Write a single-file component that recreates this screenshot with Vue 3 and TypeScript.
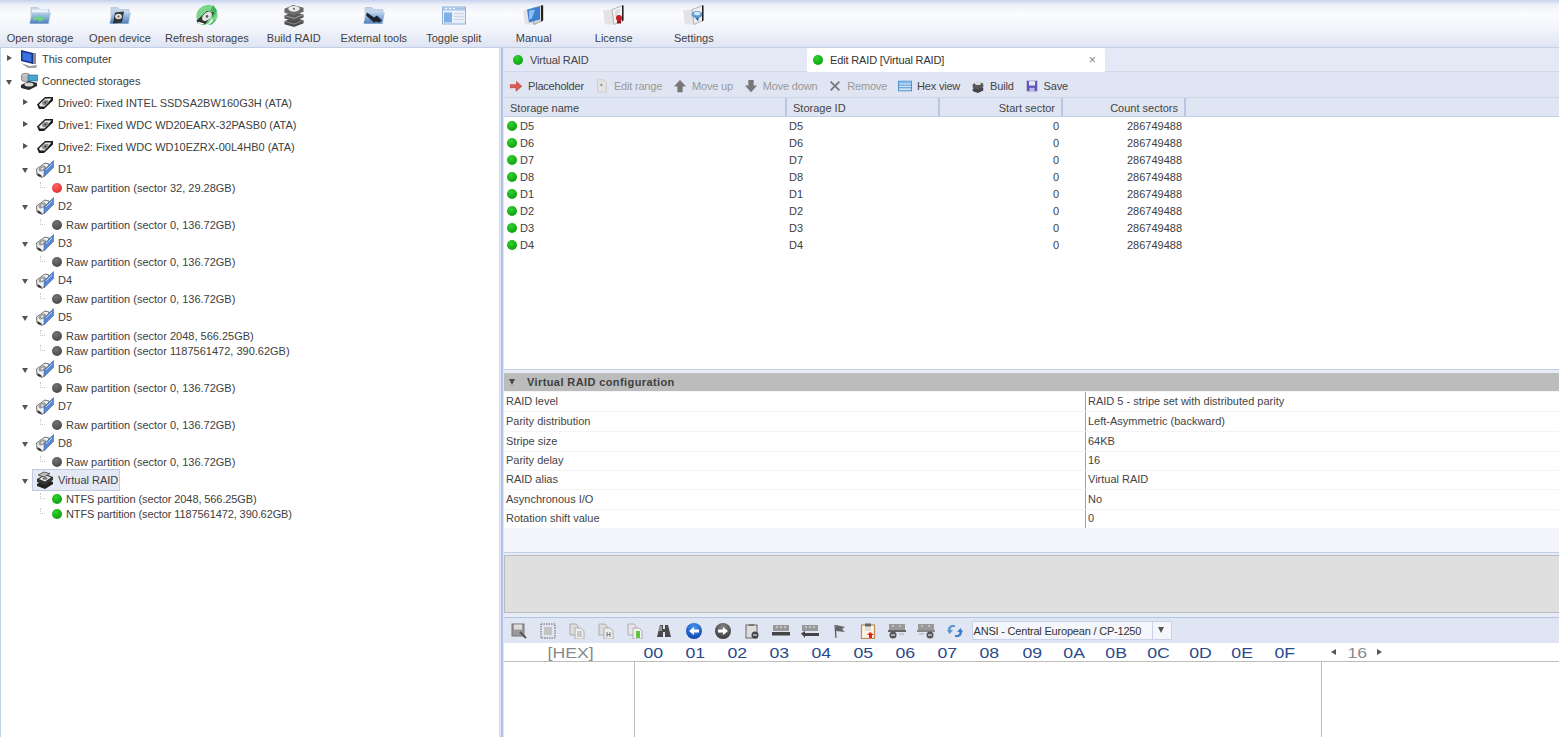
<script setup lang="ts">
type TreeRow = { label: string; indent: number; kind: string; icon?: string; open?: boolean; dot?: string; selected?: boolean };

const mainTools = [
  { label: "Open storage", icon: "i-folder-arrow" },
  { label: "Open device", icon: "i-folder-disk" },
  { label: "Refresh storages", icon: "i-refresh" },
  { label: "Build RAID", icon: "i-stack" },
  { label: "External tools", icon: "i-folder-plug" },
  { label: "Toggle split", icon: "i-split" },
  { label: "Manual", icon: "i-manual" },
  { label: "License", icon: "i-license" },
  { label: "Settings", icon: "i-settings" },
];

const tree: TreeRow[] = [
  { label: "This computer", indent: 0, kind: "node", icon: "i-computer" },
  { label: "Connected storages", indent: 0, kind: "node", icon: "i-storages", open: true },
  { label: "Drive0: Fixed INTEL SSDSA2BW160G3H (ATA)", indent: 1, kind: "node", icon: "i-disk" },
  { label: "Drive1: Fixed WDC WD20EARX-32PASB0 (ATA)", indent: 1, kind: "node", icon: "i-disk" },
  { label: "Drive2: Fixed WDC WD10EZRX-00L4HB0 (ATA)", indent: 1, kind: "node", icon: "i-disk" },
];
const addDrive = (name: string, parts: string[], dot: string) => {
  tree.push({ label: name, indent: 1, kind: "node", icon: "i-disk-blue", open: true });
  parts.forEach((p) => tree.push({ label: p, indent: 1, kind: "leaf", dot }));
};
addDrive("D1", ["Raw partition (sector 32, 29.28GB)"], "red");
addDrive("D2", ["Raw partition (sector 0, 136.72GB)"], "gray");
addDrive("D3", ["Raw partition (sector 0, 136.72GB)"], "gray");
addDrive("D4", ["Raw partition (sector 0, 136.72GB)"], "gray");
addDrive("D5", ["Raw partition (sector 2048, 566.25GB)", "Raw partition (sector 1187561472, 390.62GB)"], "gray");
addDrive("D6", ["Raw partition (sector 0, 136.72GB)"], "gray");
addDrive("D7", ["Raw partition (sector 0, 136.72GB)"], "gray");
addDrive("D8", ["Raw partition (sector 0, 136.72GB)"], "gray");
tree.push({ label: "Virtual RAID", indent: 1, kind: "node", icon: "i-raid", open: true, selected: true });
tree.push({ label: "NTFS partition (sector 2048, 566.25GB)", indent: 1, kind: "leaf", dot: "green" });
tree.push({ label: "NTFS partition (sector 1187561472, 390.62GB)", indent: 1, kind: "leaf", dot: "green" });

const editTools = [
  { label: "Placeholder", icon: "i-arrow-red", off: false },
  { label: "Edit range", icon: "i-range", off: true },
  { label: "Move up", icon: "i-up", off: true },
  { label: "Move down", icon: "i-down", off: true },
  { label: "Remove", icon: "i-x", off: true },
  { label: "Hex view", icon: "i-hex", off: false },
  { label: "Build", icon: "i-build", off: false },
  { label: "Save", icon: "i-save", off: false },
];

const storages = ["D5", "D6", "D7", "D8", "D1", "D2", "D3", "D4"];

const config = [
  { key: "RAID level", value: "RAID 5 - stripe set with distributed parity", h: 20 },
  { key: "Parity distribution", value: "Left-Asymmetric (backward)", h: 20 },
  { key: "Stripe size", value: "64KB", h: 20 },
  { key: "Parity delay", value: "16", h: 19 },
  { key: "RAID alias", value: "Virtual RAID", h: 19 },
  { key: "Asynchronous I/O", value: "No", h: 20 },
  { key: "Rotation shift value", value: "0", h: 19 },
];

const hexIcons = [
  "h-find", "h-select", "h-copy", "h-copy-h", "h-copy-g", "h-binoc", "h-back", "h-fwd", "h-clip-go",
  "h-bar-l", "h-bar-r", "h-flag", "h-clip-red", "h-bar-go", "h-bar-go2", "h-sync",
];
const hexCols = ["00", "01", "02", "03", "04", "05", "06", "07", "08", "09", "0A", "0B", "0C", "0D", "0E", "0F"];
</script>

<template>
  <div class="app">
    <svg class="defs" width="0" height="0" aria-hidden="true">
      <defs>
        <linearGradient id="gFolder" x1="0" y1="0" x2="0" y2="1"><stop offset="0" stop-color="#b9d2f0" /><stop offset="1" stop-color="#4f7fb8" /></linearGradient>
        <radialGradient id="gBlue" cx=".5" cy=".3" r=".8"><stop offset="0" stop-color="#4a9cf0" /><stop offset="1" stop-color="#0535a8" /></radialGradient>
        <radialGradient id="gDark" cx=".5" cy=".3" r=".8"><stop offset="0" stop-color="#8a8a8a" /><stop offset="1" stop-color="#2c2c2c" /></radialGradient>
      </defs>

      <symbol id="i-folder-arrow" viewBox="0 0 24 22">
        <path d="M3 3h7l2 2h9v14H3z" fill="#c4d4e8" stroke="#a9bdd6" stroke-width=".6" />
        <path d="M4 5h16v3H4z" fill="#eef3fa" />
        <path d="M4.500 8H23l-3 11H1.500z" fill="url(#gFolder)" />
        <path d="M5 12.500h6V10l6 4-6 4v-2.500H5z" fill="#6fd08a" />
      </symbol>
      <symbol id="i-folder-disk" viewBox="0 0 24 22">
        <path d="M3 3h7l2 2h9v14H3z" fill="#c4d4e8" stroke="#a9bdd6" stroke-width=".6" />
        <path d="M4.500 8H23l-3 11H1.500z" fill="url(#gFolder)" />
        <path d="M7 8l9-1-2 11-9 1z" fill="#333" />
        <ellipse cx="10.500" cy="12" rx="3.400" ry="2.800" fill="#dcdcdc" />
        <circle cx="10.500" cy="12" r="1" fill="#555" />
      </symbol>
      <symbol id="i-refresh" viewBox="0 0 26 26">
        <path d="M13 1c7-1 12 4 12 11 0 3-1 6-3 8l-4-3-3 5-6 2c-5-1-8-5-8-10C1 7 6 2 13 1z" fill="#79d68a" />
        <path d="M20 1l4 6-3 8-3-1 1-6-3 1z" fill="#3fb35c" />
        <path d="M1 19l12-11 8 2-10 13-8-1z" fill="#333" />
        <ellipse cx="13" cy="14" rx="6.500" ry="4" transform="rotate(-40 13 14)" fill="#e4e4e4" />
        <circle cx="13" cy="14" r="1.500" fill="#555" />
        <path d="M3 20l7 2-2 1-5-1z" fill="#fff" />
        <path d="M14 24l5-1 4-5-2 0-4 4z" fill="#3fb35c" />
      </symbol>
      <symbol id="i-stack" viewBox="0 0 22 24">
        <path d="M1 18l9-4 11 3v3l-10 4-10-3z" fill="#4c4c4c" />
        <path d="M1 18l10 3 10-4" fill="none" stroke="#a0a0a0" stroke-width=".8" />
        <path d="M1 12l9-4 11 3v3l-10 4-10-3z" fill="#5a5a5a" />
        <path d="M1 12l10 3 10-4" fill="none" stroke="#b0b0b0" stroke-width=".8" />
        <path d="M1 5l9-4 11 3v4l-10 4-10-3z" fill="#6a6a6a" />
        <ellipse cx="11" cy="5" rx="6" ry="3" fill="#ececec" />
        <circle cx="11" cy="5" r="1.200" fill="#777" />
      </symbol>
      <symbol id="i-folder-plug" viewBox="0 0 24 22">
        <path d="M3 3h7l2 2h9v14H3z" fill="#c4d4e8" stroke="#a9bdd6" stroke-width=".6" />
        <path d="M4.500 8H23l-3 11H1.500z" fill="url(#gFolder)" />
        <path d="M5 8l7 5 3-2 5 5-3 2-3-1-2 1-8-7z" fill="#1b2430" />
      </symbol>
      <symbol id="i-split" viewBox="0 0 24 18">
        <rect x=".5" y=".5" width="23" height="17" fill="#e9f0fa" stroke="#8db0da" />
        <rect x="1" y="1" width="22" height="3" fill="#a9c6ea" />
        <path d="M3 2h2M7 2h2M11 2h2" stroke="#fff" />
        <rect x="2" y="6" width="8" height="10" fill="#7fb0e6" />
        <path d="M12 7h10M12 10h10M12 13h10" stroke="#c7d4e6" />
        <path d="M16 6v10M19 6v10" stroke="#dbe3ee" />
      </symbol>
      <symbol id="i-manual" viewBox="0 0 24 22">
        <path d="M1 6l9-1 2 15H3z" fill="#e3e3e3" />
        <path d="M10 4l11-3v15l-9 4z" fill="#d8d8d8" stroke="#555" stroke-width=".5" />
        <path d="M5 5l13-3v13L7 18z" fill="#3c7fd0" />
        <path d="M7 6l6-1-3 9-3 1z" fill="#a8ccf2" opacity=".8" />
        <path d="M19 1l2 0v15l-2 1z" fill="#222" />
      </symbol>
      <symbol id="i-license" viewBox="0 0 24 22">
        <path d="M1 6l9-1 2 15H3z" fill="#e3e3e3" />
        <path d="M10 5l11-4v15l-9 4z" fill="#f3f3f3" stroke="#777" stroke-width=".5" />
        <path d="M13 7l5-2M13 9l5-2M13 11l3-1" stroke="#bbb" stroke-width=".8" />
        <circle cx="17" cy="13.500" r="3" fill="#cc1c1c" />
        <path d="M15 16h4v3h-4z" fill="#a01010" />
        <path d="M20 1h1.500v15l-1.500 1z" fill="#222" />
      </symbol>
      <symbol id="i-settings" viewBox="0 0 24 22">
        <path d="M1 6l9-1 2 15H3z" fill="#e3e3e3" />
        <path d="M10 5l11-4v15l-9 4z" fill="#eee" stroke="#777" stroke-width=".5" />
        <ellipse cx="15" cy="10" rx="5.500" ry="3.500" fill="#5b9bd8" />
        <ellipse cx="15" cy="9" rx="3.200" ry="1.800" fill="#d6e9fa" />
        <path d="M13 13l3 4 1-4z" fill="#3d6f9f" />
        <path d="M20 1h1.500v15l-1.500 1z" fill="#222" />
      </symbol>

      <symbol id="i-computer" viewBox="0 0 18 18">
        <path d="M1 0l12 3v11L1 11z" fill="#16308c" />
        <path d="M2.500 2l9 2.200v7.800l-9-2.300z" fill="#3d73e0" />
        <path d="M13 3l3 0v11l-3 0z" fill="#8c8c8c" />
        <path d="M1 13l9 3 7-1-1 3H8z" fill="#a0a0a0" />
      </symbol>
      <symbol id="i-storages" viewBox="0 0 18 18">
        <ellipse cx="5.500" cy="3.500" rx="4" ry="2.200" fill="#c9c9c9" stroke="#555" stroke-width=".6" />
        <path d="M1.500 4v4c1 2 7 2 8 0V4" fill="#bdbdbd" stroke="#555" stroke-width=".6" />
        <rect x="8" y="3" width="9.500" height="6" fill="#45a6cf" stroke="#27627e" stroke-width=".6" />
        <path d="M1 13l8-4 8 2v3l-8 4-8-2z" fill="#2b2b2b" />
        <ellipse cx="9" cy="12.500" rx="4.500" ry="2" fill="#d8d8d8" />
      </symbol>
      <symbol id="i-disk" viewBox="0 0 18 18">
        <path d="M1 10.500L9 3h8v3.500L8 15H3z" fill="#1c1c1c" />
        <path d="M3 10.500L9.500 4.500h6L8.500 12.500H4z" fill="#ececec" />
        <ellipse cx="9.300" cy="8.500" rx="3.600" ry="2.200" transform="rotate(-30 9.300 8.500)" fill="#8f8f8f" />
        <circle cx="9.300" cy="8.500" r="1" fill="#333" />
      </symbol>
      <symbol id="i-disk-blue" viewBox="0 0 18 18">
        <path d="M.5 9L9 3l4 1v7l-7 6.500L1 15z" fill="#f0f0f0" stroke="#333" stroke-width=".7" />
        <ellipse cx="6.300" cy="8.500" rx="4" ry="2.400" transform="rotate(-30 6.300 8.500)" fill="#9a9a9a" />
        <ellipse cx="6.300" cy="8.500" rx="1.500" ry="1" transform="rotate(-30 6.300 8.500)" fill="#e8e8e8" />
        <path d="M8 10l9.500-9.500v7L8 17z" fill="#5a87d2" stroke="#2f5aa0" stroke-width=".5" />
        <path d="M10 10l6-6" stroke="#b5cff2" />
        <path d="M1.500 13l4 2.500v1.500L2 16z" fill="#333" />
      </symbol>
      <symbol id="i-raid" viewBox="0 0 18 18">
        <path d="M1 13l8-5 8 3v2l-8 5-8-3z" fill="#222" />
        <path d="M1 8l8-5 8 3v3l-8 5-8-3z" fill="#333" />
        <path d="M3 8l6-4 6 2.400L9 10.600z" fill="#e4e4e4" />
        <path d="M2 4l6-3 6 1.600-6 3.400z" fill="#bdbdbd" stroke="#222" stroke-width=".6" />
        <ellipse cx="9" cy="7.400" rx="2.400" ry="1.400" fill="#777" />
      </symbol>

      <symbol id="i-arrow-red" viewBox="0 0 16 16">
        <path d="M1 6h7V2l7 6-7 6v-4H1z" fill="#d65a55" />
        <path d="M1 10h7v4l7-6" fill="none" stroke="#8a2e2a" stroke-width=".5" />
      </symbol>
      <symbol id="i-range" viewBox="0 0 16 16">
        <path d="M3 1h7l3 3v11H3z" fill="#e4e4e4" stroke="#c9c9c9" />
        <path d="M6 7h3M7 5v3" stroke="#888" />
      </symbol>
      <symbol id="i-up" viewBox="0 0 16 16"><path d="M8 1l7 7.500h-4V15H5V8.500H1z" fill="#777" /></symbol>
      <symbol id="i-down" viewBox="0 0 16 16"><path d="M8 15L1 7.500h4V1h6v6.500h4z" fill="#777" /></symbol>
      <symbol id="i-x" viewBox="0 0 16 16"><path d="M3 3l10 10M13 3L3 13" stroke="#777" stroke-width="2" /></symbol>
      <symbol id="i-hex" viewBox="0 0 16 16">
        <rect x=".5" y="2.500" width="15" height="11" fill="#cfe4f8" stroke="#3f86c9" />
        <rect x="1" y="3" width="14" height="2" fill="#7db8ea" />
        <path d="M1 7h14M1 10h14" stroke="#3f86c9" />
      </symbol>
      <symbol id="i-build" viewBox="0 0 16 16">
        <path d="M2 11l6-3 6 2v3l-6 3-6-2z" fill="#444" />
        <path d="M2 6l6-3 6 2v4l-6 3-6-2z" fill="#5a5a5a" />
        <ellipse cx="8" cy="5" rx="3.500" ry="1.800" fill="#ddd" />
      </symbol>
      <symbol id="i-save" viewBox="0 0 16 16">
        <rect x="2" y="2" width="12" height="12" fill="#5b56b8" />
        <rect x="4.500" y="2.500" width="7" height="5" fill="#e9e9f5" />
        <rect x="5" y="10" width="6" height="4" fill="#b9b7dc" />
      </symbol>

      <symbol id="h-find" viewBox="0 0 16 16"><rect x="1" y="1" width="12" height="12" fill="#9a9a9a" stroke="#777" /><rect x="3" y="1.500" width="8" height="5" fill="#ddd" /><path d="M9 9l6 6" stroke="#555" stroke-width="2" /></symbol>
      <symbol id="h-select" viewBox="0 0 16 16"><rect x="1" y="1" width="14" height="14" fill="none" stroke="#666" stroke-dasharray="1.500 1" /><rect x="4" y="4" width="8" height="8" fill="#c4c4c4" /></symbol>
      <symbol id="h-copy" viewBox="0 0 16 16"><path d="M1 1h6l2 2v9H1z" fill="#ddd" stroke="#999" stroke-width=".7" /><path d="M6 5h6l3 3v8H6z" fill="#eee" stroke="#999" stroke-width=".7" /><path d="M8 9h5M8 11h5M8 13h5" stroke="#888" stroke-width=".7" /></symbol>
      <symbol id="h-copy-h" viewBox="0 0 16 16"><path d="M1 1h6l2 2v9H1z" fill="#ddd" stroke="#999" stroke-width=".7" /><path d="M6 5h6l3 3v8H6z" fill="#eee" stroke="#999" stroke-width=".7" /><path d="M9 9v5M12 9v5M9 11.500h3" stroke="#777" /></symbol>
      <symbol id="h-copy-g" viewBox="0 0 16 16"><path d="M1 1h6l2 2v9H1z" fill="#e6e6e6" stroke="#999" stroke-width=".7" /><path d="M6 5h6l3 3v8H6z" fill="#f2f2f2" stroke="#999" stroke-width=".7" /><rect x="9" y="8" width="4" height="7" fill="#65c33d" /></symbol>
      <symbol id="h-binoc" viewBox="0 0 16 16"><path d="M4 2h3v4h2V2h3l3 12H9V9H7v5H1z" fill="#4a4a4a" /><path d="M4 3h2v5H3z" fill="#999" /></symbol>
      <symbol id="h-back" viewBox="0 0 16 16"><circle cx="8" cy="8" r="8" fill="url(#gBlue)" /><path d="M3 8l5-4v2.500h5v3H8V12z" fill="#fff" /></symbol>
      <symbol id="h-fwd" viewBox="0 0 16 16"><circle cx="8" cy="8" r="8" fill="url(#gDark)" /><path d="M13 8L8 4v2.500H3v3h5V12z" fill="#fff" /></symbol>
      <symbol id="h-clip-go" viewBox="0 0 16 16"><rect x="2" y="2" width="11" height="13" fill="#ddd" stroke="#666" /><rect x="5" y="1" width="5" height="2" fill="#777" /><circle cx="11" cy="12" r="3.500" fill="#444" /><path d="M9 12h4" stroke="#fff" /></symbol>
      <symbol id="h-bar-l" viewBox="0 0 18 14"><rect x="1" y="1" width="16" height="6" fill="#999" /><path d="M4 3h2M8 3h2M12 3h2" stroke="#eee" /><rect x="0" y="8" width="18" height="3.500" fill="#444" /></symbol>
      <symbol id="h-bar-r" viewBox="0 0 18 14"><rect x="1" y="1" width="16" height="6" fill="#999" /><path d="M4 3h2M8 3h2M12 3h2" stroke="#eee" /><path d="M0 9.500L4 7v2h14v3H4v2z" fill="#444" /></symbol>
      <symbol id="h-flag" viewBox="0 0 16 16"><path d="M4 2l1 13" stroke="#555" stroke-width="1.200" /><path d="M5 2l9 2-3 2 3 3-9-1z" fill="#666" /></symbol>
      <symbol id="h-clip-red" viewBox="0 0 16 16"><rect x="1.500" y="2" width="13" height="13.500" fill="#fbf3e4" stroke="#c08a50" stroke-width="1.200" /><rect x="5" y="0.500" width="6" height="3" fill="#666" /><path d="M5 5h6M5 7h6" stroke="#c9c9c9" /><path d="M7 12l3-3 4 3h-2v3H9v-3z" fill="#e0261e" /></symbol>
      <symbol id="h-bar-go" viewBox="0 0 18 16"><rect x="1" y="1" width="16" height="6" fill="#999" /><path d="M4 3h2M11 3h2" stroke="#eee" /><rect x="0" y="7" width="18" height="2" fill="#666" /><circle cx="5" cy="12" r="3.500" fill="#555" /><path d="M3 12h4" stroke="#fff" /><path d="M11 11h5" stroke="#aaa" /></symbol>
      <symbol id="h-bar-go2" viewBox="0 0 18 16"><rect x="1" y="1" width="16" height="6" fill="#999" /><path d="M4 3h2M11 3h2" stroke="#eee" /><rect x="0" y="7" width="18" height="2" fill="#888" /><circle cx="13" cy="12" r="3.500" fill="#555" /><path d="M11 12h4" stroke="#fff" /><path d="M2 11h5" stroke="#aaa" /></symbol>
      <symbol id="h-sync" viewBox="0 0 16 16"><path d="M1 7c0-3 2-5 5-5h2v2H6C4.500 4 3.500 5 3.500 7H6l-3.500 4L0 7z" fill="#5a93cf" /><path d="M15 9c0 3-2 5-5 5H8v-2h2c1.500 0 2.500-1 2.500-3H10l3.500-4L16 9z" fill="#3f7fc4" /></symbol>
    </svg>

    <header class="main-bar">
      <button v-for="t in mainTools" :key="t.label" class="main-tool">
        <svg class="main-icon"><use :href="'#' + t.icon" /></svg>
        <span>{{ t.label }}</span>
      </button>
    </header>

    <div class="body">
      <aside class="tree">
        <div
          v-for="(row, i) in tree"
          :key="i"
          class="tree-row"
          :class="[row.kind, row.dot]"
          :style="{ paddingLeft: row.indent * 16 + 5 + 'px' }"
        >
          <template v-if="row.kind === 'node'">
            <span class="caret" :class="{ open: row.open }"></span>
            <span class="node-body" :class="{ selected: row.selected }">
              <svg class="node-icon"><use :href="'#' + row.icon" /></svg>
              <span>{{ row.label }}</span>
            </span>
          </template>
          <template v-else>
            <span class="elbow"></span>
            <span class="dot" :class="row.dot"></span>
            <span>{{ row.label }}</span>
          </template>
        </div>
      </aside>

      <main class="right">
        <div class="tabs">
          <div class="tab first"><span class="dot green"></span>Virtual RAID</div>
          <div class="tab active">
            <span class="dot green"></span>Edit RAID [Virtual RAID]
            <span class="close">×</span>
          </div>
        </div>

        <div class="edit-bar">
          <span v-for="t in editTools" :key="t.label" class="edit-tool" :class="{ off: t.off }">
            <svg class="edit-icon"><use :href="'#' + t.icon" /></svg>
            {{ t.label }}
          </span>
        </div>

        <section class="table">
          <div class="thead">
            <div class="th c-name">Storage name</div>
            <div class="th c-id">Storage ID</div>
            <div class="th c-start num">Start sector</div>
            <div class="th c-count num">Count sectors</div>
          </div>
          <div v-for="s in storages" :key="s" class="tr">
            <div class="td c-name"><span class="dot green"></span>{{ s }}</div>
            <div class="td c-id">{{ s }}</div>
            <div class="td c-start num">0</div>
            <div class="td c-count num">286749488</div>
          </div>
        </section>

        <div class="split"></div>

        <section class="config">
          <div class="group"><span class="group-caret"></span>Virtual RAID configuration</div>
          <div v-for="c in config" :key="c.key" class="prop" :style="{ height: c.h + 'px' }">
            <div class="prop-key">{{ c.key }}</div>
            <div class="prop-val">{{ c.value }}</div>
          </div>
        </section>

        <div class="split thin"></div>
        <div class="info"></div>
        <div class="split hex-split"></div>

        <div class="hex-bar">
          <svg v-for="h in hexIcons" :key="h" class="hex-icon"><use :href="'#' + h" /></svg>
          <div class="combo">
            <span class="combo-text">ANSI - Central European / CP-1250</span>
            <span class="combo-btn"></span>
          </div>
        </div>

        <div class="hex-head">
          <div class="hex-off"><span class="wide">[HEX]</span></div>
          <div class="hex-cols"><span v-for="c in hexCols" :key="c"><span class="wide">{{ c }}</span></span></div>
          <div class="hex-width"><i class="tri left"></i><span class="wide">16</span><i class="tri right"></i></div>
        </div>
        <div class="hex-body">
          <div class="hb-off"></div>
          <div class="hb-data"></div>
          <div class="hb-text"></div>
        </div>
      </main>
    </div>
  </div>
</template>

<style>
html,
body {
  margin: 0;
  overflow: hidden;
}
</style>

<style scoped>
.app {
  width: 1559px;
  height: 737px;
  display: flex;
  flex-direction: column;
  overflow: hidden;
  background: #dfe5f3;
  color: #3c3c3c;
  font: 11px "Liberation Sans", Arial, sans-serif;
}
.defs {
  position: absolute;
}

.main-bar {
  height: 48px;
  flex: none;
  display: flex;
  background: linear-gradient(#c6d3ee 0, #eef1f8 5px, #fbfcfe 14px, #f2f4fa 30px, #dfe5f3 46px);
  box-sizing: border-box;
  border-bottom: 1px solid #c3cfe8;
}
.main-tool {
  min-width: 80px;
  box-sizing: border-box;
  padding: 4px 5px 0;
  border: 0;
  background: none;
  font: inherit;
  color: #3f3f3f;
  display: flex;
  flex-direction: column;
  align-items: center;
  gap: 5px;
}
.main-icon {
  width: 24px;
  height: 23px;
}

.body {
  flex: 1;
  display: flex;
  min-height: 0;
}

.tree {
  width: 500px;
  flex: none;
  box-sizing: border-box;
  background: #fff;
  border-left: 1px solid #c3cfe8;
  border-right: 1px solid #d3dcee;
}
.tree-row {
  display: flex;
  align-items: center;
  box-sizing: border-box;
  white-space: nowrap;
  color: #404040;
}
.tree-row.node {
  height: 22px;
}
.tree-row.leaf {
  height: 15px;
}
.tree-row.green {
  letter-spacing: -0.1px;
}
.caret {
  width: 16px;
  height: 16px;
  flex: none;
  position: relative;
}
.caret::before {
  content: "";
  position: absolute;
  left: 1px;
  top: 4px;
  border: 3.500px solid transparent;
  border-left: 5px solid #555;
  border-right: 0;
}
.caret.open::before {
  left: 0;
  top: 7px;
  border: 3px solid transparent;
  border-top: 5px solid #555;
  border-bottom: 0;
}
.node-body {
  display: flex;
  align-items: center;
  gap: 4px;
  height: 20px;
  margin-left: -2px;
}
.node-body.selected {
  background: #e4e9f5;
  outline: 1px solid #bfcbe3;
  margin-left: -5px;
  padding: 0 1px 0 3px;
}
.node-icon {
  width: 18px;
  height: 18px;
  flex: none;
}
.elbow {
  width: 30px;
  height: 15px;
  flex: none;
  position: relative;
}
.elbow::before {
  content: "";
  position: absolute;
  left: 18px;
  top: 2px;
  width: 4px;
  height: 5px;
  border-left: 1px dotted #c8c8c8;
  border-bottom: 1px dotted #c8c8c8;
}
.dot {
  width: 10px;
  height: 10px;
  border-radius: 50%;
  flex: none;
  margin-right: 4px;
}
.dot.green {
  background: radial-gradient(circle at 40% 30%, #2fd32f, #068f06);
}
.dot.red {
  background: radial-gradient(circle at 40% 30%, #ff6666, #d91d1d);
}
.dot.gray {
  background: radial-gradient(circle at 40% 30%, #737373, #3e3e3e);
}

.right {
  flex: 1;
  min-width: 0;
  display: flex;
  flex-direction: column;
  box-sizing: border-box;
  padding-left: 4px;
  background: linear-gradient(90deg, #e0e6f4 0 1px, #b3c3e6 1px 3px, #dfe5f3 3px);
}

.tabs {
  height: 24px;
  flex: none;
  display: flex;
  background: #e4e9f5;
  border-bottom: 1px solid #cfd9ee;
  box-sizing: border-box;
  letter-spacing: -0.15px;
}
.tab {
  display: flex;
  align-items: center;
  padding-left: 9px;
  height: 24px;
  box-sizing: border-box;
  color: #444;
}
.tab .dot {
  margin-right: 7px;
}
.tab.first {
  width: 303px;
}
.tab.active {
  width: 298px;
  padding-left: 6px;
  background: #fff;
  position: relative;
  color: #333;
  border-radius: 2px 2px 0 0;
}
.close {
  position: absolute;
  right: 9px;
  top: 4px;
  font-size: 13px;
  color: #888;
}

.edit-bar {
  height: 26px;
  flex: none;
  display: flex;
  align-items: center;
  padding: 2px 0 0 5px;
  gap: 11px;
  background: #dfe5f3;
  border-bottom: 1px solid #cdd7ec;
  box-sizing: border-box;
  letter-spacing: -0.2px;
}
.edit-tool {
  display: flex;
  align-items: center;
  gap: 5px;
  color: #444;
  white-space: nowrap;
}
.edit-tool.off {
  color: #9a9a9a;
}
.edit-icon {
  width: 14px;
  height: 14px;
}

.table {
  height: 271px;
  flex: none;
  background: #fff;
  box-sizing: border-box;
  padding-left: 1px;
}
.thead {
  display: flex;
  height: 18px;
  background: #dfe5f3;
  margin-left: -1px;
  border-bottom: 1px solid #c4d0e9;
}
.th {
  box-sizing: border-box;
  height: 18px;
  line-height: 20px;
  padding: 0 6px;
  border-right: 2px solid #b9c7e4;
  color: #444;
}
.tr {
  display: flex;
  height: 17px;
  align-items: center;
}
.td {
  box-sizing: border-box;
  padding: 0 5px 0 1px;
  display: flex;
  align-items: center;
  color: #404040;
}
.td .dot {
  margin-right: 3px;
}
.td.c-name {
  padding-left: 2px;
}
.c-name {
  width: 283px;
}
.c-id {
  width: 153px;
}
.c-start {
  width: 123px;
}
.c-count {
  width: 123px;
}
.th.num {
  text-align: right;
}
.td.num {
  justify-content: flex-end;
}

.split {
  height: 4px;
  flex: none;
  background: #e8ecf6;
  border-top: 1px solid #c2cfe8;
  box-sizing: border-box;
}
.split.thin {
  height: 3px;
}
.hex-split {
  height: 5px;
  border-top: 0;
  border-bottom: 1px solid #b3c3e4;
}

.config {
  height: 179px;
  flex: none;
  background: #f3f5fa;
  box-sizing: border-box;
}
.group {
  height: 18px;
  background: #bcbcbc;
  font-weight: bold;
  color: #3f3f3f;
  display: flex;
  align-items: center;
  padding-left: 5px;
  margin-bottom: 1px;
  letter-spacing: 0.4px;
}
.group-caret {
  width: 0;
  height: 0;
  border: 3.500px solid transparent;
  border-top: 6px solid #4a4a4a;
  border-bottom: 0;
  margin-right: 12px;
}
.prop {
  display: flex;
  background: #fff;
  box-sizing: border-box;
  border-bottom: 1px solid #f4f4f4;
  color: #444;
  align-items: stretch;
}
.prop-key {
  width: 582px;
  padding: 0 0 2px 2px;
  box-sizing: border-box;
  display: flex;
  align-items: center;
  border-right: 1px solid #8da0c6;
}
.prop-val {
  padding: 0 0 2px 2px;
  display: flex;
  align-items: center;
}

.info {
  height: 58px;
  flex: none;
  background: #dfdfdf;
  border: 1px solid #b9b9b9;
  border-right: 0;
  box-sizing: border-box;
}

.hex-bar {
  height: 25px;
  flex: none;
  display: flex;
  align-items: center;
  gap: 11.100px;
  padding-left: 6px;
  background: #dfe5f3;
  box-sizing: border-box;
}
.hex-icon {
  width: 18px;
  height: 16px;
  flex: none;
}
.combo {
  display: flex;
  width: 200px;
  height: 19px;
  margin-left: -4px;
  background: #f4f6fb;
  border: 1px solid #c8d3ea;
  box-sizing: border-box;
  align-items: center;
  letter-spacing: -0.2px;
}
.combo-text {
  flex: 1;
  padding-left: 1px;
  color: #333;
  white-space: nowrap;
}
.combo-btn {
  width: 19px;
  height: 100%;
  border-left: 1px solid #c8d3ea;
  position: relative;
  box-sizing: border-box;
}
.combo-btn::after {
  content: "";
  position: absolute;
  left: 5px;
  top: 5px;
  border: 3.500px solid transparent;
  border-top: 6px solid #555;
  border-bottom: 0;
}

.hex-head {
  height: 19px;
  flex: none;
  display: flex;
  align-items: center;
  background: #fff;
  border-bottom: 1px solid #bcbcbc;
  box-sizing: border-box;
  font-size: 15px;
  color: #2a4a8c;
}
.wide {
  display: inline-block;
  transform: scaleX(1.18);
}
.hex-off {
  width: 130px;
  text-align: center;
  color: #8a8a8a;
  transform: translateX(2px);
}
.hex-cols {
  display: flex;
  width: 674px;
  margin-left: -4px;
  padding-left: 2px;
  box-sizing: border-box;
}
.hex-cols > span {
  width: 42.100px;
  text-align: center;
  flex: none;
}
.hex-width {
  display: flex;
  align-items: center;
  color: #8a8a8a;
  margin-left: 27px;
}
.hex-width .wide {
  margin: 0 11px 0 13px;
}
.tri {
  width: 0;
  height: 0;
  border: 3.500px solid transparent;
}
.tri.left {
  border-right: 5px solid #555;
  border-left: 0;
}
.tri.right {
  border-left: 5px solid #555;
  border-right: 0;
}

.hex-body {
  flex: 1;
  display: flex;
  background: #fff;
}
.hb-off {
  width: 130px;
  border-right: 1px solid #bcbcbc;
}
.hb-data {
  width: 686px;
  border-right: 1px solid #bcbcbc;
}
.hb-text {
  flex: 1;
}
</style>
